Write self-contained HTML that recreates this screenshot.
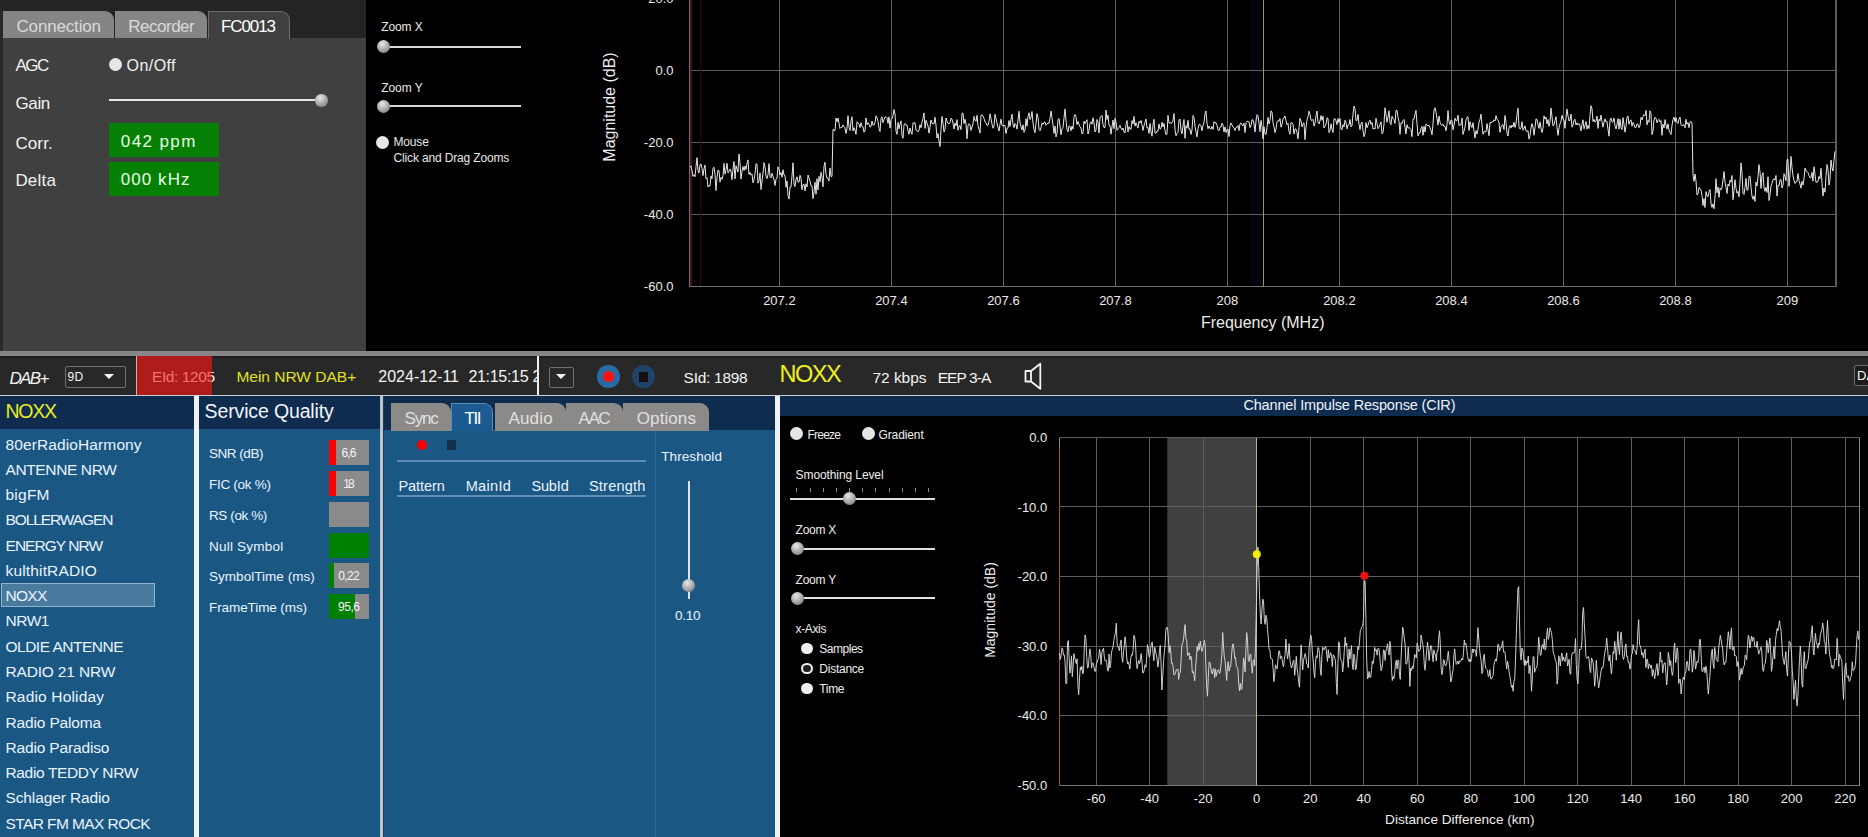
<!DOCTYPE html>
<html><head><meta charset="utf-8"><style>
html,body{margin:0;padding:0;background:#000;width:1868px;height:837px;overflow:hidden;}
body{position:relative;font-family:"Liberation Sans", sans-serif;}
.r{position:absolute;}
.t{position:absolute;white-space:nowrap;}
</style></head><body>
<div class="r" style="left:0px;top:0px;width:366px;height:351px;background:#404040;"></div><div class="r" style="left:0px;top:0px;width:366px;height:38px;background:#242424;"></div><div class="r" style="left:0px;top:11px;width:2.5px;height:340px;background:#2a2a2a;"></div><div class="r" style="left:3px;top:11px;width:111px;height:27px;background:#858585;border-top-right-radius:9px;"></div><div class="r" style="left:115px;top:11px;width:92px;height:27px;background:#858585;border-top-right-radius:9px;"></div><div class="r" style="left:208px;top:11px;width:80px;height:27px;background:#404040;border:1.5px solid #6c6c6c;border-bottom:none;border-top-right-radius:9px;box-sizing:content-box;"></div><div class="t" style="left:16.50px;top:17.61px;font-size:17px;line-height:17px;color:#dadada;letter-spacing:-0.167px;">Connection</div><div class="t" style="left:128.30px;top:17.61px;font-size:17px;line-height:17px;color:#dadada;letter-spacing:-0.503px;">Recorder</div><div class="t" style="left:221.00px;top:17.61px;font-size:17px;line-height:17px;color:#ffffff;letter-spacing:-1.097px;">FC0013</div><div class="t" style="left:15.50px;top:56.91px;font-size:17px;line-height:17px;color:#f2f2f2;letter-spacing:-1.569px;">AGC</div><div class="r" style="left:109.0px;top:58.0px;width:13px;height:13px;border-radius:50%;background:#e6e6e6;"></div><div class="t" style="left:126.60px;top:58.46px;font-size:16px;line-height:16px;color:#f2f2f2;letter-spacing:0.427px;">On/Off</div><div class="t" style="left:15.50px;top:94.91px;font-size:17px;line-height:17px;color:#f2f2f2;letter-spacing:-0.401px;">Gain</div><div class="r" style="left:109px;top:99px;width:208px;height:2px;background:#e6e6e6;"></div><div class="r" style="left:315.4px;top:94.0px;width:12.5px;height:12.5px;border-radius:50%;background:radial-gradient(circle at 40% 30%, #e8e8e8 0%, #b0b0b0 45%, #6a6a6a 100%);"></div><div class="t" style="left:15.40px;top:135.11px;font-size:17px;line-height:17px;color:#f2f2f2;letter-spacing:0.115px;">Corr.</div><div class="r" style="left:109px;top:123px;width:110px;height:34px;background:#058005;"></div><div class="t" style="left:120.80px;top:133.21px;font-size:17px;line-height:17px;color:#e6ffe0;letter-spacing:1.389px;">042 ppm</div><div class="t" style="left:15.40px;top:172.41px;font-size:17px;line-height:17px;color:#f2f2f2;letter-spacing:0.201px;">Delta</div><div class="r" style="left:109px;top:162px;width:110px;height:34px;background:#058005;"></div><div class="t" style="left:120.80px;top:171.11px;font-size:17px;line-height:17px;color:#e6ffe0;letter-spacing:1.057px;">000 kHz</div><div class="t" style="left:381.20px;top:21.34px;font-size:12px;line-height:12px;color:#e8e8e8;letter-spacing:-0.082px;">Zoom X</div><div class="r" style="left:389px;top:45.6px;width:132px;height:2px;background:#d8d8d8;"></div><div class="r" style="left:376.5px;top:40.2px;width:13px;height:13px;border-radius:50%;background:radial-gradient(circle at 40% 30%, #e8e8e8 0%, #b0b0b0 45%, #6a6a6a 100%);"></div><div class="t" style="left:381.20px;top:81.84px;font-size:12px;line-height:12px;color:#e8e8e8;letter-spacing:-0.039px;">Zoom Y</div><div class="r" style="left:389px;top:105.3px;width:132px;height:2px;background:#d8d8d8;"></div><div class="r" style="left:376.5px;top:99.8px;width:13px;height:13px;border-radius:50%;background:radial-gradient(circle at 40% 30%, #e8e8e8 0%, #b0b0b0 45%, #6a6a6a 100%);"></div><div class="r" style="left:375.7px;top:135.7px;width:13px;height:13px;border-radius:50%;background:#e6e6e6;"></div><div class="t" style="left:393.50px;top:136.04px;font-size:12px;line-height:12px;color:#e8e8e8;letter-spacing:-0.178px;">Mouse</div><div class="t" style="left:393.50px;top:152.34px;font-size:12px;line-height:12px;color:#e8e8e8;letter-spacing:-0.153px;">Click and Drag Zooms</div><svg class="r" style="left:0;top:0" width="1868" height="351"><rect x="1251" y="0" width="11" height="286" fill="#04040f"/><line x1="690" y1="-1.5" x2="1836" y2="-1.5" stroke="#5e5e5e" stroke-width="1"/><line x1="690" y1="70.5" x2="1836" y2="70.5" stroke="#5e5e5e" stroke-width="1"/><line x1="690" y1="142.5" x2="1836" y2="142.5" stroke="#5e5e5e" stroke-width="1"/><line x1="690" y1="214.5" x2="1836" y2="214.5" stroke="#5e5e5e" stroke-width="1"/><line x1="690" y1="286.5" x2="1836" y2="286.5" stroke="#707070" stroke-width="1"/><line x1="779.5" y1="0" x2="779.5" y2="286.5" stroke="#5e5e5e" stroke-width="1"/><line x1="891.5" y1="0" x2="891.5" y2="286.5" stroke="#5e5e5e" stroke-width="1"/><line x1="1003.5" y1="0" x2="1003.5" y2="286.5" stroke="#5e5e5e" stroke-width="1"/><line x1="1115.5" y1="0" x2="1115.5" y2="286.5" stroke="#5e5e5e" stroke-width="1"/><line x1="1227.5" y1="0" x2="1227.5" y2="286.5" stroke="#5e5e5e" stroke-width="1"/><line x1="1339.5" y1="0" x2="1339.5" y2="286.5" stroke="#5e5e5e" stroke-width="1"/><line x1="1451.5" y1="0" x2="1451.5" y2="286.5" stroke="#5e5e5e" stroke-width="1"/><line x1="1563.5" y1="0" x2="1563.5" y2="286.5" stroke="#5e5e5e" stroke-width="1"/><line x1="1675.5" y1="0" x2="1675.5" y2="286.5" stroke="#5e5e5e" stroke-width="1"/><line x1="1787.5" y1="0" x2="1787.5" y2="286.5" stroke="#5e5e5e" stroke-width="1"/><line x1="1836" y1="0" x2="1836" y2="287" stroke="#5a5a5a" stroke-width="2"/><line x1="1263.5" y1="0" x2="1263.5" y2="286.5" stroke="#a0a030" stroke-width="1"/><line x1="689.5" y1="0" x2="689.5" y2="287" stroke="#6a6a6a" stroke-width="1"/><line x1="691" y1="0" x2="691" y2="286" stroke="#621224" stroke-width="1.5"/><line x1="700.5" y1="0" x2="700.5" y2="286" stroke="#2a080c" stroke-width="1"/><polyline points="690.0,167.2 691.0,165.8 692.0,171.0 693.0,176.4 694.0,174.8 695.0,176.7 696.0,166.8 697.0,157.7 698.0,170.7 699.0,173.1 700.0,164.5 701.0,164.1 702.0,168.3 703.0,175.6 704.0,168.8 705.0,165.0 706.0,178.8 707.0,177.7 708.0,187.0 709.0,185.5 710.0,186.2 711.0,175.9 712.0,178.8 713.0,168.3 714.0,167.2 715.0,174.4 716.0,190.6 717.0,177.7 718.0,170.0 719.0,170.8 720.0,182.1 721.0,177.4 722.0,179.4 723.0,175.7 724.0,163.4 725.0,174.1 726.0,169.5 727.0,163.3 728.0,173.0 729.0,171.4 730.0,168.9 731.0,171.2 732.0,179.7 733.0,169.1 734.0,161.5 735.0,178.9 736.0,165.7 737.0,169.0 738.0,172.0 739.0,154.0 740.0,163.0 741.0,179.1 742.0,171.4 743.0,166.5 744.0,170.5 745.0,166.1 746.0,169.5 747.0,163.6 748.0,159.9 749.0,174.4 750.0,172.2 751.0,175.2 752.0,174.0 753.0,182.8 754.0,179.6 755.0,173.6 756.0,163.7 757.0,164.3 758.0,183.2 759.0,180.9 760.0,172.9 761.0,189.5 762.0,181.1 763.0,173.2 764.0,162.7 765.0,166.9 766.0,176.5 767.0,178.6 768.0,174.7 769.0,163.6 770.0,176.4 771.0,177.9 772.0,173.3 773.0,176.4 774.0,179.6 775.0,185.5 776.0,179.1 777.0,178.1 778.0,166.8 779.0,169.5 780.0,175.0 781.0,172.5 782.0,177.3 783.0,169.7 784.0,175.1 785.0,175.6 786.0,187.3 787.0,181.0 788.0,195.6 789.0,199.1 790.0,186.9 791.0,187.1 792.0,176.0 793.0,162.8 794.0,184.1 795.0,186.6 796.0,179.2 797.0,176.8 798.0,182.1 799.0,182.1 800.0,175.3 801.0,178.2 802.0,189.8 803.0,184.7 804.0,184.3 805.0,190.9 806.0,183.7 807.0,187.0 808.0,175.0 809.0,178.0 810.0,181.1 811.0,185.7 812.0,185.9 813.0,198.6 814.0,191.9 815.0,182.2 816.0,194.3 817.0,178.6 818.0,189.9 819.0,176.4 820.0,181.9 821.0,172.3 822.0,177.3 823.0,186.8 824.0,166.3 825.0,162.2 826.0,174.2 827.0,178.0 828.0,178.5 829.0,181.0 830.0,168.0 831.0,176.5 832.0,176.4 833.0,129.4 834.0,130.2 835.0,130.7 836.0,118.0 837.0,121.8 838.0,118.1 839.0,123.3 840.0,128.4 841.0,127.4 842.0,127.6 843.0,124.9 844.0,126.4 845.0,127.9 846.0,133.5 847.0,128.3 848.0,115.7 849.0,127.1 850.0,130.6 851.0,121.3 852.0,116.7 853.0,131.0 854.0,127.7 855.0,130.1 856.0,134.3 857.0,121.7 858.0,122.9 859.0,124.4 860.0,127.6 861.0,122.7 862.0,126.6 863.0,126.8 864.0,132.2 865.0,130.8 866.0,117.9 867.0,124.7 868.0,122.7 869.0,124.2 870.0,127.1 871.0,126.6 872.0,121.0 873.0,125.0 874.0,125.1 875.0,122.3 876.0,115.8 877.0,117.7 878.0,121.3 879.0,128.5 880.0,131.6 881.0,118.6 882.0,116.9 883.0,122.7 884.0,119.7 885.0,117.3 886.0,116.6 887.0,117.7 888.0,123.4 889.0,116.8 890.0,128.2 891.0,119.6 892.0,118.6 893.0,115.4 894.0,109.4 895.0,113.9 896.0,131.0 897.0,134.4 898.0,122.3 899.0,128.9 900.0,124.1 901.0,120.9 902.0,135.4 903.0,138.3 904.0,124.9 905.0,123.5 906.0,125.2 907.0,125.0 908.0,130.9 909.0,134.2 910.0,128.0 911.0,132.0 912.0,134.3 913.0,122.9 914.0,123.0 915.0,122.7 916.0,130.1 917.0,130.3 918.0,131.8 919.0,130.2 920.0,124.8 921.0,127.8 922.0,122.2 923.0,118.6 924.0,112.9 925.0,128.4 926.0,120.3 927.0,123.2 928.0,125.9 929.0,133.1 930.0,127.5 931.0,120.0 932.0,123.2 933.0,123.8 934.0,123.9 935.0,117.2 936.0,125.3 937.0,138.0 938.0,133.4 939.0,140.8 940.0,146.6 941.0,129.5 942.0,116.4 943.0,123.3 944.0,132.0 945.0,129.5 946.0,118.0 947.0,121.3 948.0,123.4 949.0,124.0 950.0,122.6 951.0,118.2 952.0,119.1 953.0,123.1 954.0,129.1 955.0,122.9 956.0,125.8 957.0,119.7 958.0,130.2 959.0,126.3 960.0,125.7 961.0,129.6 962.0,113.2 963.0,113.3 964.0,123.7 965.0,119.2 966.0,123.9 967.0,138.7 968.0,125.7 969.0,123.7 970.0,124.8 971.0,130.5 972.0,127.0 973.0,123.7 974.0,116.4 975.0,120.2 976.0,121.4 977.0,115.3 978.0,125.7 979.0,129.2 980.0,133.2 981.0,115.4 982.0,114.7 983.0,116.1 984.0,118.4 985.0,122.0 986.0,122.7 987.0,125.3 988.0,125.3 989.0,121.8 990.0,113.9 991.0,118.5 992.0,124.2 993.0,128.2 994.0,126.3 995.0,114.3 996.0,118.6 997.0,123.2 998.0,127.2 999.0,131.0 1000.0,124.5 1001.0,119.1 1002.0,125.3 1003.0,125.9 1004.0,125.3 1005.0,125.5 1006.0,133.6 1007.0,128.4 1008.0,128.1 1009.0,120.5 1010.0,126.5 1011.0,119.3 1012.0,114.2 1013.0,124.5 1014.0,127.6 1015.0,123.4 1016.0,124.8 1017.0,129.2 1018.0,119.7 1019.0,111.3 1020.0,123.0 1021.0,126.7 1022.0,129.9 1023.0,124.8 1024.0,132.3 1025.0,130.4 1026.0,118.7 1027.0,126.2 1028.0,116.4 1029.0,112.8 1030.0,119.5 1031.0,117.6 1032.0,111.5 1033.0,123.2 1034.0,129.4 1035.0,132.7 1036.0,123.4 1037.0,113.6 1038.0,117.3 1039.0,129.3 1040.0,130.8 1041.0,127.6 1042.0,122.9 1043.0,124.4 1044.0,122.4 1045.0,122.1 1046.0,125.3 1047.0,124.1 1048.0,122.7 1049.0,123.4 1050.0,118.4 1051.0,111.1 1052.0,117.7 1053.0,124.9 1054.0,133.4 1055.0,126.1 1056.0,136.9 1057.0,133.7 1058.0,119.5 1059.0,118.6 1060.0,126.0 1061.0,134.8 1062.0,129.1 1063.0,127.5 1064.0,117.9 1065.0,109.0 1066.0,120.6 1067.0,129.7 1068.0,131.9 1069.0,125.9 1070.0,126.4 1071.0,130.8 1072.0,126.1 1073.0,129.1 1074.0,117.2 1075.0,114.5 1076.0,116.5 1077.0,124.6 1078.0,121.5 1079.0,124.4 1080.0,126.7 1081.0,128.0 1082.0,133.9 1083.0,133.2 1084.0,121.1 1085.0,123.6 1086.0,121.4 1087.0,119.7 1088.0,134.0 1089.0,130.5 1090.0,123.2 1091.0,121.7 1092.0,124.2 1093.0,117.8 1094.0,122.7 1095.0,132.0 1096.0,129.9 1097.0,119.5 1098.0,122.4 1099.0,132.9 1100.0,117.3 1101.0,116.7 1102.0,115.4 1103.0,124.7 1104.0,127.5 1105.0,127.7 1106.0,110.1 1107.0,119.5 1108.0,115.3 1109.0,125.4 1110.0,125.8 1111.0,134.2 1112.0,127.0 1113.0,120.0 1114.0,128.7 1115.0,118.5 1116.0,121.7 1117.0,130.3 1118.0,128.8 1119.0,127.3 1120.0,125.4 1121.0,128.2 1122.0,129.9 1123.0,128.0 1124.0,132.0 1125.0,133.0 1126.0,124.6 1127.0,120.5 1128.0,131.9 1129.0,126.6 1130.0,129.0 1131.0,129.4 1132.0,120.6 1133.0,123.9 1134.0,116.4 1135.0,126.1 1136.0,122.7 1137.0,125.6 1138.0,127.9 1139.0,121.4 1140.0,123.2 1141.0,120.4 1142.0,124.7 1143.0,130.5 1144.0,125.7 1145.0,122.4 1146.0,119.1 1147.0,128.1 1148.0,127.4 1149.0,133.4 1150.0,123.5 1151.0,131.8 1152.0,136.2 1153.0,125.0 1154.0,119.2 1155.0,133.0 1156.0,133.3 1157.0,131.1 1158.0,131.1 1159.0,124.0 1160.0,129.1 1161.0,128.4 1162.0,122.2 1163.0,127.0 1164.0,123.4 1165.0,130.7 1166.0,134.7 1167.0,134.0 1168.0,115.3 1169.0,123.0 1170.0,122.8 1171.0,123.4 1172.0,122.8 1173.0,120.8 1174.0,113.5 1175.0,129.6 1176.0,135.8 1177.0,133.6 1178.0,132.2 1179.0,119.9 1180.0,119.1 1181.0,130.3 1182.0,133.9 1183.0,125.9 1184.0,119.5 1185.0,138.3 1186.0,125.6 1187.0,128.2 1188.0,120.3 1189.0,129.3 1190.0,128.8 1191.0,134.5 1192.0,129.8 1193.0,115.6 1194.0,117.6 1195.0,126.3 1196.0,132.0 1197.0,136.9 1198.0,128.6 1199.0,124.6 1200.0,124.4 1201.0,125.9 1202.0,130.8 1203.0,125.7 1204.0,122.4 1205.0,113.6 1206.0,111.0 1207.0,123.2 1208.0,128.7 1209.0,126.0 1210.0,128.5 1211.0,129.1 1212.0,126.4 1213.0,129.4 1214.0,121.6 1215.0,123.3 1216.0,122.6 1217.0,125.5 1218.0,129.6 1219.0,130.8 1220.0,127.1 1221.0,127.1 1222.0,123.1 1223.0,125.3 1224.0,131.9 1225.0,126.9 1226.0,132.6 1227.0,129.6 1228.0,129.0 1229.0,136.6 1230.0,125.7 1231.0,123.0 1232.0,125.1 1233.0,127.0 1234.0,127.8 1235.0,130.5 1236.0,127.4 1237.0,127.3 1238.0,125.5 1239.0,130.6 1240.0,123.7 1241.0,122.8 1242.0,125.0 1243.0,125.9 1244.0,123.2 1245.0,132.5 1246.0,122.8 1247.0,121.3 1248.0,121.3 1249.0,121.9 1250.0,127.6 1251.0,125.4 1252.0,119.7 1253.0,120.1 1254.0,123.9 1255.0,132.0 1256.0,121.0 1257.0,114.7 1258.0,115.9 1259.0,123.1 1260.0,131.7 1261.0,120.3 1262.0,126.7 1263.0,138.8 1264.0,126.7 1265.0,134.0 1266.0,134.4 1267.0,127.6 1268.0,117.4 1269.0,124.0 1270.0,120.4 1271.0,110.8 1272.0,112.0 1273.0,122.7 1274.0,127.0 1275.0,132.6 1276.0,129.1 1277.0,121.6 1278.0,120.7 1279.0,121.3 1280.0,118.6 1281.0,127.2 1282.0,124.2 1283.0,118.7 1284.0,117.9 1285.0,116.0 1286.0,120.4 1287.0,124.7 1288.0,123.3 1289.0,131.5 1290.0,134.2 1291.0,122.5 1292.0,123.0 1293.0,124.2 1294.0,134.1 1295.0,129.0 1296.0,129.0 1297.0,132.7 1298.0,138.9 1299.0,127.6 1300.0,118.3 1301.0,121.1 1302.0,126.9 1303.0,123.7 1304.0,122.8 1305.0,139.6 1306.0,127.4 1307.0,119.8 1308.0,116.8 1309.0,111.2 1310.0,114.3 1311.0,120.0 1312.0,120.5 1313.0,119.3 1314.0,126.1 1315.0,123.5 1316.0,115.8 1317.0,111.0 1318.0,122.3 1319.0,124.0 1320.0,120.9 1321.0,115.5 1322.0,120.3 1323.0,116.2 1324.0,128.0 1325.0,126.4 1326.0,124.2 1327.0,117.9 1328.0,118.4 1329.0,132.7 1330.0,130.8 1331.0,123.8 1332.0,129.3 1333.0,132.5 1334.0,118.8 1335.0,118.8 1336.0,120.8 1337.0,124.7 1338.0,118.5 1339.0,122.5 1340.0,118.6 1341.0,129.0 1342.0,129.9 1343.0,124.6 1344.0,126.9 1345.0,120.3 1346.0,122.5 1347.0,128.9 1348.0,125.0 1349.0,124.6 1350.0,119.5 1351.0,127.0 1352.0,125.7 1353.0,114.1 1354.0,106.1 1355.0,108.7 1356.0,120.5 1357.0,120.4 1358.0,114.4 1359.0,123.8 1360.0,129.7 1361.0,123.8 1362.0,122.0 1363.0,130.3 1364.0,136.7 1365.0,133.7 1366.0,122.6 1367.0,127.7 1368.0,125.3 1369.0,121.9 1370.0,120.2 1371.0,124.4 1372.0,122.4 1373.0,129.0 1374.0,128.4 1375.0,129.0 1376.0,118.3 1377.0,123.4 1378.0,128.7 1379.0,127.2 1380.0,124.7 1381.0,121.9 1382.0,133.9 1383.0,132.6 1384.0,124.1 1385.0,107.7 1386.0,114.9 1387.0,122.3 1388.0,117.0 1389.0,110.7 1390.0,123.0 1391.0,124.7 1392.0,116.3 1393.0,118.4 1394.0,119.7 1395.0,123.5 1396.0,110.6 1397.0,110.2 1398.0,117.3 1399.0,121.5 1400.0,134.3 1401.0,122.8 1402.0,123.6 1403.0,120.5 1404.0,119.5 1405.0,127.1 1406.0,134.0 1407.0,124.7 1408.0,128.2 1409.0,127.5 1410.0,128.3 1411.0,129.6 1412.0,136.6 1413.0,119.1 1414.0,119.2 1415.0,114.2 1416.0,110.4 1417.0,123.4 1418.0,135.8 1419.0,133.1 1420.0,132.9 1421.0,128.3 1422.0,126.5 1423.0,135.3 1424.0,126.3 1425.0,132.1 1426.0,124.1 1427.0,124.5 1428.0,125.9 1429.0,125.3 1430.0,127.9 1431.0,130.4 1432.0,134.8 1433.0,123.7 1434.0,110.1 1435.0,107.7 1436.0,112.3 1437.0,118.7 1438.0,125.1 1439.0,116.0 1440.0,122.3 1441.0,124.6 1442.0,125.5 1443.0,124.2 1444.0,126.4 1445.0,126.3 1446.0,130.9 1447.0,124.5 1448.0,110.6 1449.0,121.6 1450.0,124.6 1451.0,120.0 1452.0,120.3 1453.0,129.9 1454.0,125.3 1455.0,118.2 1456.0,120.8 1457.0,120.7 1458.0,115.1 1459.0,125.8 1460.0,124.8 1461.0,124.9 1462.0,118.0 1463.0,134.5 1464.0,131.0 1465.0,127.0 1466.0,119.7 1467.0,117.5 1468.0,116.6 1469.0,130.5 1470.0,121.7 1471.0,125.4 1472.0,127.5 1473.0,122.6 1474.0,131.3 1475.0,138.0 1476.0,130.6 1477.0,134.1 1478.0,129.2 1479.0,122.0 1480.0,119.4 1481.0,114.1 1482.0,124.9 1483.0,134.3 1484.0,131.5 1485.0,131.9 1486.0,131.8 1487.0,123.6 1488.0,129.7 1489.0,135.7 1490.0,122.3 1491.0,123.1 1492.0,121.6 1493.0,121.9 1494.0,119.8 1495.0,121.1 1496.0,115.7 1497.0,119.1 1498.0,120.3 1499.0,122.7 1500.0,132.3 1501.0,127.0 1502.0,125.3 1503.0,124.6 1504.0,129.6 1505.0,115.5 1506.0,122.6 1507.0,133.2 1508.0,136.0 1509.0,127.8 1510.0,125.6 1511.0,128.1 1512.0,125.0 1513.0,126.8 1514.0,122.2 1515.0,127.5 1516.0,123.7 1517.0,114.6 1518.0,108.3 1519.0,127.1 1520.0,129.0 1521.0,128.4 1522.0,121.6 1523.0,130.3 1524.0,128.2 1525.0,125.9 1526.0,131.0 1527.0,131.4 1528.0,130.6 1529.0,139.0 1530.0,135.8 1531.0,128.0 1532.0,123.7 1533.0,127.0 1534.0,135.3 1535.0,127.8 1536.0,118.8 1537.0,119.5 1538.0,124.7 1539.0,128.4 1540.0,121.9 1541.0,128.0 1542.0,132.6 1543.0,128.3 1544.0,115.8 1545.0,119.1 1546.0,117.1 1547.0,124.0 1548.0,119.5 1549.0,126.4 1550.0,122.3 1551.0,108.0 1552.0,116.6 1553.0,125.9 1554.0,124.5 1555.0,120.4 1556.0,116.7 1557.0,127.4 1558.0,135.3 1559.0,127.7 1560.0,123.9 1561.0,121.4 1562.0,115.3 1563.0,119.1 1564.0,119.9 1565.0,128.3 1566.0,117.3 1567.0,109.0 1568.0,116.1 1569.0,121.0 1570.0,120.2 1571.0,114.0 1572.0,127.2 1573.0,125.1 1574.0,120.2 1575.0,119.3 1576.0,125.1 1577.0,122.8 1578.0,124.9 1579.0,123.6 1580.0,125.9 1581.0,130.9 1582.0,124.2 1583.0,119.8 1584.0,128.8 1585.0,125.6 1586.0,121.5 1587.0,129.1 1588.0,125.4 1589.0,128.5 1590.0,115.3 1591.0,105.7 1592.0,108.9 1593.0,121.5 1594.0,119.4 1595.0,122.0 1596.0,121.0 1597.0,116.0 1598.0,128.4 1599.0,119.2 1600.0,120.9 1601.0,115.1 1602.0,121.7 1603.0,127.2 1604.0,122.0 1605.0,118.9 1606.0,122.0 1607.0,121.5 1608.0,129.1 1609.0,136.2 1610.0,120.2 1611.0,118.2 1612.0,121.9 1613.0,121.8 1614.0,118.0 1615.0,126.1 1616.0,128.9 1617.0,124.3 1618.0,118.6 1619.0,129.1 1620.0,119.2 1621.0,127.5 1622.0,129.6 1623.0,117.7 1624.0,124.4 1625.0,132.2 1626.0,126.4 1627.0,117.1 1628.0,115.9 1629.0,124.3 1630.0,121.0 1631.0,119.8 1632.0,126.3 1633.0,122.5 1634.0,124.2 1635.0,127.7 1636.0,127.4 1637.0,124.0 1638.0,124.2 1639.0,127.7 1640.0,125.6 1641.0,117.3 1642.0,119.9 1643.0,116.6 1644.0,114.6 1645.0,115.7 1646.0,110.4 1647.0,124.8 1648.0,120.4 1649.0,122.3 1650.0,110.8 1651.0,113.6 1652.0,134.6 1653.0,131.3 1654.0,120.0 1655.0,117.2 1656.0,118.4 1657.0,122.7 1658.0,120.3 1659.0,119.3 1660.0,122.1 1661.0,120.6 1662.0,135.3 1663.0,124.2 1664.0,128.0 1665.0,119.6 1666.0,125.1 1667.0,129.0 1668.0,123.9 1669.0,130.0 1670.0,132.5 1671.0,134.5 1672.0,125.3 1673.0,119.5 1674.0,117.1 1675.0,122.0 1676.0,117.6 1677.0,122.4 1678.0,123.6 1679.0,119.1 1680.0,117.1 1681.0,124.8 1682.0,125.9 1683.0,125.0 1684.0,124.7 1685.0,127.8 1686.0,119.3 1687.0,124.3 1688.0,122.6 1689.0,127.7 1690.0,122.2 1691.0,121.5 1692.0,123.2 1693.0,174.7 1694.0,181.3 1695.0,174.0 1696.0,180.9 1697.0,195.0 1698.0,194.0 1699.0,187.3 1700.0,188.9 1701.0,190.1 1702.0,195.4 1703.0,205.5 1704.0,198.6 1705.0,207.5 1706.0,191.6 1707.0,195.9 1708.0,196.7 1709.0,191.7 1710.0,189.6 1711.0,203.1 1712.0,207.4 1713.0,203.9 1714.0,208.7 1715.0,197.0 1716.0,178.7 1717.0,192.8 1718.0,186.9 1719.0,197.4 1720.0,188.2 1721.0,189.8 1722.0,187.5 1723.0,179.7 1724.0,171.5 1725.0,182.2 1726.0,187.3 1727.0,193.5 1728.0,184.1 1729.0,186.1 1730.0,180.2 1731.0,182.2 1732.0,175.5 1733.0,199.7 1734.0,190.3 1735.0,179.7 1736.0,188.4 1737.0,193.1 1738.0,191.4 1739.0,196.8 1740.0,182.4 1741.0,162.9 1742.0,173.2 1743.0,193.4 1744.0,194.5 1745.0,187.6 1746.0,178.4 1747.0,190.5 1748.0,189.7 1749.0,176.5 1750.0,176.0 1751.0,187.3 1752.0,196.2 1753.0,199.4 1754.0,195.8 1755.0,201.4 1756.0,182.1 1757.0,186.0 1758.0,176.8 1759.0,164.6 1760.0,171.8 1761.0,188.4 1762.0,175.3 1763.0,172.6 1764.0,187.9 1765.0,191.3 1766.0,187.3 1767.0,192.5 1768.0,176.7 1769.0,200.5 1770.0,195.1 1771.0,185.8 1772.0,183.2 1773.0,179.6 1774.0,178.8 1775.0,180.1 1776.0,175.5 1777.0,196.0 1778.0,185.4 1779.0,185.9 1780.0,179.9 1781.0,179.6 1782.0,188.1 1783.0,185.2 1784.0,173.7 1785.0,176.5 1786.0,180.8 1787.0,159.7 1788.0,159.3 1789.0,186.4 1790.0,174.6 1791.0,156.4 1792.0,167.5 1793.0,175.7 1794.0,180.6 1795.0,183.4 1796.0,181.8 1797.0,181.6 1798.0,173.5 1799.0,180.5 1800.0,184.0 1801.0,188.2 1802.0,181.5 1803.0,185.0 1804.0,178.3 1805.0,168.2 1806.0,171.2 1807.0,171.4 1808.0,172.7 1809.0,175.6 1810.0,177.8 1811.0,177.7 1812.0,172.4 1813.0,181.2 1814.0,166.8 1815.0,174.4 1816.0,182.5 1817.0,182.0 1818.0,181.5 1819.0,176.4 1820.0,178.7 1821.0,168.3 1822.0,183.2 1823.0,196.0 1824.0,188.1 1825.0,192.2 1826.0,176.3 1827.0,164.5 1828.0,169.3 1829.0,185.1 1830.0,179.3 1831.0,160.0 1832.0,167.9 1833.0,171.0 1834.0,160.4 1835.0,151.3" fill="none" stroke="#e6e6e6" stroke-width="1"/></svg><div class="t" style="left:648.20px;top:-7.70px;font-size:13px;line-height:13px;color:#ececec;">20.0</div><div class="t" style="left:655.43px;top:64.30px;font-size:13px;line-height:13px;color:#ececec;">0.0</div><div class="t" style="left:643.87px;top:136.30px;font-size:13px;line-height:13px;color:#ececec;">-20.0</div><div class="t" style="left:643.87px;top:208.30px;font-size:13px;line-height:13px;color:#ececec;">-40.0</div><div class="t" style="left:643.87px;top:280.30px;font-size:13px;line-height:13px;color:#ececec;">-60.0</div><div class="t" style="left:763.14px;top:294.00px;font-size:13px;line-height:13px;color:#ececec;">207.2</div><div class="t" style="left:875.14px;top:294.00px;font-size:13px;line-height:13px;color:#ececec;">207.4</div><div class="t" style="left:987.14px;top:294.00px;font-size:13px;line-height:13px;color:#ececec;">207.6</div><div class="t" style="left:1099.14px;top:294.00px;font-size:13px;line-height:13px;color:#ececec;">207.8</div><div class="t" style="left:1216.56px;top:294.00px;font-size:13px;line-height:13px;color:#ececec;">208</div><div class="t" style="left:1323.14px;top:294.00px;font-size:13px;line-height:13px;color:#ececec;">208.2</div><div class="t" style="left:1435.14px;top:294.00px;font-size:13px;line-height:13px;color:#ececec;">208.4</div><div class="t" style="left:1547.14px;top:294.00px;font-size:13px;line-height:13px;color:#ececec;">208.6</div><div class="t" style="left:1659.14px;top:294.00px;font-size:13px;line-height:13px;color:#ececec;">208.8</div><div class="t" style="left:1776.56px;top:294.00px;font-size:13px;line-height:13px;color:#ececec;">209</div><div class="t" style="left:1200.91px;top:314.66px;font-size:16px;line-height:16px;color:#ececec;">Frequency (MHz)</div><div class="t" style="left:609.6px;top:106.8px;font-size:16px;line-height:16px;color:#ececec;transform:translate(-50%,-50%) rotate(-90deg);">Magnitude (dB)</div><div class="r" style="left:0px;top:351px;width:1868px;height:5px;background:#868686;"></div><div class="r" style="left:0px;top:356px;width:1868px;height:39px;background:#282828;"></div><div class="r" style="left:0px;top:356px;width:1868px;height:1.5px;background:#1c1c1c;"></div><div class="r" style="left:0px;top:395px;width:1868px;height:1px;background:#c4ccd4;"></div><div class="t" style="left:9.40px;top:369.51px;font-size:17px;line-height:17px;color:#f4f4f4;letter-spacing:-1.593px;font-style:italic;">DAB+</div><div class="r" style="left:65px;top:366px;width:59px;height:20px;border:1.2px solid #707070;border-radius:2px;"></div><div class="t" style="left:67.50px;top:370.84px;font-size:12px;line-height:12px;color:#f4f4f4;letter-spacing:0.364px;">9D</div><div class="r" style="left:104px;top:374px;width:0;height:0;border-left:5px solid transparent;border-right:5px solid transparent;border-top:5.5px solid #f4f4f4;"></div><div class="r" style="left:136px;top:356px;width:76px;height:39px;background:#b01c1c;"></div><div class="r" style="left:136px;top:356px;width:1px;height:39px;background:#e0a8a8;"></div><div class="r" style="left:136px;top:356px;width:76px;height:39px;overflow:hidden;"><div class="t" style="left:16.00px;top:13.28px;font-size:15.5px;line-height:15.5px;color:#f07474;letter-spacing:-0.419px;">EId: 1205</div></div><div class="r" style="left:212px;top:356px;width:20px;height:39px;overflow:hidden;"><div class="t" style="left:-60.00px;top:13.28px;font-size:15.5px;line-height:15.5px;color:#f4f4f4;letter-spacing:-0.419px;">EId: 1205</div></div><div class="t" style="left:236.40px;top:369.28px;font-size:15.5px;line-height:15.5px;color:#e2e21e;letter-spacing:-0.005px;">Mein NRW DAB+</div><div class="r" style="left:370px;top:356px;width:167px;height:39px;overflow:hidden;"><div class="t" style="left:8.30px;top:13.06px;font-size:16px;line-height:16px;color:#f4f4f4;letter-spacing:0.005px;">2024-12-11</div><div class="t" style="left:98.40px;top:13.06px;font-size:16px;line-height:16px;color:#f4f4f4;letter-spacing:-0.300px;">21:15:15 2024</div></div><div class="r" style="left:537px;top:356px;width:2px;height:39px;background:#f0f0f0;"></div><div class="r" style="left:548.5px;top:366.5px;width:23px;height:19px;border:1.2px solid #707070;border-radius:2px;"></div><div class="r" style="left:556px;top:374px;width:0;height:0;border-left:5px solid transparent;border-right:5px solid transparent;border-top:5.5px solid #f4f4f4;"></div><div class="r" style="left:597.2px;top:365.4px;width:22.5px;height:22.5px;border-radius:50%;background:#2a6aa2;"></div><div class="r" style="left:603.0px;top:371.1px;width:11px;height:11px;border-radius:50%;background:#ff1010;"></div><div class="r" style="left:632.0px;top:365.3px;width:23px;height:23px;border-radius:50%;background:#20436a;"></div><div class="r" style="left:639.3px;top:372.3px;width:9px;height:10px;background:#141010;"></div><div class="t" style="left:683.60px;top:369.68px;font-size:15.5px;line-height:15.5px;color:#f4f4f4;letter-spacing:-0.282px;">SId: 1898</div><div class="t" style="left:779.60px;top:362.71px;font-size:23.5px;line-height:23.5px;color:#f0f020;letter-spacing:-1.533px;">NOXX</div><div class="t" style="left:872.50px;top:369.68px;font-size:15.5px;line-height:15.5px;color:#f4f4f4;letter-spacing:-0.047px;">72 kbps</div><div class="t" style="left:937.70px;top:369.68px;font-size:15.5px;line-height:15.5px;color:#f4f4f4;letter-spacing:-0.911px;">EEP 3-A</div><svg class="r" style="left:1020px;top:360px" width="28" height="32"><path d="M5.5 11 H11 L20.3 3.8 V28.8 L11 21.5 H5.5 Z M11 11 V21.5" fill="none" stroke="#f4f4f4" stroke-width="1.8" stroke-linejoin="round"/></svg><div class="r" style="left:1854px;top:364.5px;width:20px;height:19.5px;border:1.2px solid #6a6a6a;border-radius:2px;background:#1c1c1c;"></div><div class="t" style="left:1857.00px;top:368.60px;font-size:13px;line-height:13px;color:#f4f4f4;">DA</div><div class="r" style="left:0px;top:396px;width:1868px;height:441px;background:#000;"></div><div class="r" style="left:0px;top:396px;width:194px;height:441px;background:#1a5783;"></div><div class="r" style="left:0px;top:396px;width:194px;height:33px;background:#0f2c4f;"></div><div class="r" style="left:194px;top:396px;width:5px;height:441px;background:#eef2f6;"></div><div class="t" style="left:5.40px;top:402.49px;font-size:19.5px;line-height:19.5px;color:#e8ea1e;letter-spacing:-1.221px;">NOXX</div><div class="r" style="left:0.5px;top:582.5px;width:154.5px;height:24.5px;background:#4a7a9e;border:1px solid #90b4d0;box-sizing:border-box;"></div><div class="t" style="left:5.50px;top:436.58px;font-size:15.5px;line-height:15.5px;color:#eaf4ff;letter-spacing:0.113px;">80erRadioHarmony</div><div class="t" style="left:5.50px;top:461.85px;font-size:15.5px;line-height:15.5px;color:#eaf4ff;letter-spacing:-0.380px;">ANTENNE NRW</div><div class="t" style="left:5.50px;top:487.12px;font-size:15.5px;line-height:15.5px;color:#eaf4ff;letter-spacing:0.235px;">bigFM</div><div class="t" style="left:5.50px;top:512.39px;font-size:15.5px;line-height:15.5px;color:#eaf4ff;letter-spacing:-1.087px;">BOLLERWAGEN</div><div class="t" style="left:5.50px;top:537.66px;font-size:15.5px;line-height:15.5px;color:#eaf4ff;letter-spacing:-0.958px;">ENERGY NRW</div><div class="t" style="left:5.50px;top:562.93px;font-size:15.5px;line-height:15.5px;color:#eaf4ff;letter-spacing:0.157px;">kulthitRADIO</div><div class="t" style="left:5.50px;top:588.20px;font-size:15.5px;line-height:15.5px;color:#eaf4ff;letter-spacing:-0.709px;">NOXX</div><div class="t" style="left:5.50px;top:613.47px;font-size:15.5px;line-height:15.5px;color:#eaf4ff;letter-spacing:-0.484px;">NRW1</div><div class="t" style="left:5.50px;top:638.74px;font-size:15.5px;line-height:15.5px;color:#eaf4ff;letter-spacing:-0.503px;">OLDIE ANTENNE</div><div class="t" style="left:5.50px;top:664.01px;font-size:15.5px;line-height:15.5px;color:#eaf4ff;letter-spacing:-0.171px;">RADIO 21 NRW</div><div class="t" style="left:5.50px;top:689.28px;font-size:15.5px;line-height:15.5px;color:#eaf4ff;letter-spacing:0.166px;">Radio Holiday</div><div class="t" style="left:5.50px;top:714.55px;font-size:15.5px;line-height:15.5px;color:#eaf4ff;letter-spacing:-0.152px;">Radio Paloma</div><div class="t" style="left:5.50px;top:739.82px;font-size:15.5px;line-height:15.5px;color:#eaf4ff;letter-spacing:-0.159px;">Radio Paradiso</div><div class="t" style="left:5.50px;top:765.09px;font-size:15.5px;line-height:15.5px;color:#eaf4ff;letter-spacing:-0.352px;">Radio TEDDY NRW</div><div class="t" style="left:5.50px;top:790.36px;font-size:15.5px;line-height:15.5px;color:#eaf4ff;letter-spacing:-0.121px;">Schlager Radio</div><div class="t" style="left:5.50px;top:815.63px;font-size:15.5px;line-height:15.5px;color:#eaf4ff;letter-spacing:-0.584px;">STAR FM MAX ROCK</div><div class="r" style="left:199px;top:396px;width:181px;height:441px;background:#1a5783;"></div><div class="r" style="left:199px;top:396px;width:181px;height:33px;background:#0f2c4f;"></div><div class="r" style="left:380px;top:396px;width:2.5px;height:441px;background:#b8c4d0;"></div><div class="r" style="left:382.5px;top:396px;width:1px;height:441px;background:#2a3a4a;"></div><div class="t" style="left:204.60px;top:402.19px;font-size:19.5px;line-height:19.5px;color:#f2f6fa;letter-spacing:-0.138px;">Service Quality</div><div class="t" style="left:209.00px;top:447.27px;font-size:13.5px;line-height:13.5px;color:#eaf4ff;letter-spacing:-0.479px;">SNR (dB)</div><div class="r" style="left:329px;top:440px;width:40px;height:25px;background:#8a8a8a;"></div><div class="r" style="left:329px;top:440px;width:7px;height:25px;background:#ff0000;"></div><div class="t" style="left:341.55px;top:446.84px;font-size:12px;line-height:12px;color:#f4f4f4;letter-spacing:-0.890px;">6,6</div><div class="t" style="left:209.00px;top:478.07px;font-size:13.5px;line-height:13.5px;color:#eaf4ff;letter-spacing:-0.289px;">FIC (ok %)</div><div class="r" style="left:329px;top:471px;width:40px;height:25px;background:#8a8a8a;"></div><div class="r" style="left:329px;top:471px;width:7px;height:25px;background:#ff0000;"></div><div class="t" style="left:343.30px;top:477.64px;font-size:12px;line-height:12px;color:#f4f4f4;letter-spacing:-1.944px;">18</div><div class="t" style="left:209.00px;top:508.87px;font-size:13.5px;line-height:13.5px;color:#eaf4ff;letter-spacing:-0.401px;">RS (ok %)</div><div class="r" style="left:329px;top:502px;width:40px;height:25px;background:#8a8a8a;"></div><div class="t" style="left:209.00px;top:539.67px;font-size:13.5px;line-height:13.5px;color:#eaf4ff;letter-spacing:0.218px;">Null Symbol</div><div class="r" style="left:329px;top:533px;width:40px;height:25px;background:#8a8a8a;"></div><div class="r" style="left:329px;top:533px;width:40px;height:25px;background:#008000;"></div><div class="t" style="left:209.00px;top:570.47px;font-size:13.5px;line-height:13.5px;color:#eaf4ff;letter-spacing:0.040px;">SymbolTime (ms)</div><div class="r" style="left:329px;top:563px;width:40px;height:25px;background:#8a8a8a;"></div><div class="r" style="left:329px;top:563px;width:5px;height:25px;background:#008000;"></div><div class="t" style="left:338.25px;top:570.04px;font-size:12px;line-height:12px;color:#f4f4f4;letter-spacing:-0.617px;">0,22</div><div class="t" style="left:209.00px;top:601.27px;font-size:13.5px;line-height:13.5px;color:#eaf4ff;letter-spacing:-0.088px;">FrameTime (ms)</div><div class="r" style="left:329px;top:594px;width:40px;height:25px;background:#8a8a8a;"></div><div class="r" style="left:329px;top:594px;width:26px;height:25px;background:#008000;"></div><div class="t" style="left:337.95px;top:600.84px;font-size:12px;line-height:12px;color:#f4f4f4;letter-spacing:-0.417px;">95,6</div><div class="r" style="left:383.5px;top:396px;width:391.5px;height:441px;background:#1a5783;"></div><div class="r" style="left:383.5px;top:396px;width:391.5px;height:34px;background:#0f2c4f;"></div><div class="r" style="left:775px;top:396px;width:5px;height:441px;background:#eef2f6;"></div><div class="r" style="left:391px;top:403px;width:60px;height:28px;background:#8c8a88;border-top-right-radius:9px;"></div><div class="t" style="left:404.50px;top:409.61px;font-size:17px;line-height:17px;color:#e0e0e0;letter-spacing:-1.164px;">Sync</div><div class="r" style="left:451px;top:403px;width:42px;height:28px;background:#1b5b92;border:1px solid #5a8cb8;border-bottom:none;box-sizing:border-box;border-top-right-radius:9px;"></div><div class="t" style="left:464.50px;top:409.61px;font-size:17px;line-height:17px;color:#ffffff;letter-spacing:-1.420px;">TII</div><div class="r" style="left:495px;top:403px;width:71px;height:28px;background:#8c8a88;border-top-right-radius:9px;"></div><div class="t" style="left:508.40px;top:409.61px;font-size:17px;line-height:17px;color:#e0e0e0;letter-spacing:0.179px;">Audio</div><div class="r" style="left:566px;top:403px;width:57px;height:28px;background:#8c8a88;border-top-right-radius:9px;"></div><div class="t" style="left:578.60px;top:409.61px;font-size:17px;line-height:17px;color:#e0e0e0;letter-spacing:-1.526px;">AAC</div><div class="r" style="left:623px;top:403px;width:86px;height:28px;background:#8c8a88;border-top-right-radius:9px;"></div><div class="t" style="left:636.80px;top:409.61px;font-size:17px;line-height:17px;color:#e0e0e0;letter-spacing:0.086px;">Options</div><div class="r" style="left:417.4px;top:439.6px;width:10px;height:10px;border-radius:50%;background:#ff0000;"></div><div class="r" style="left:447px;top:440px;width:9px;height:10px;background:#13304f;"></div><div class="r" style="left:397px;top:459.5px;width:249px;height:2px;background:#5f8db4;"></div><div class="r" style="left:655px;top:431px;width:1px;height:406px;background:#2c6896;"></div><div class="t" style="left:661.30px;top:449.77px;font-size:13.5px;line-height:13.5px;color:#eaf4ff;letter-spacing:0.071px;">Threshold</div><div class="t" style="left:398.50px;top:479.23px;font-size:14.5px;line-height:14.5px;color:#eaf4ff;letter-spacing:-0.075px;">Pattern</div><div class="t" style="left:465.70px;top:479.23px;font-size:14.5px;line-height:14.5px;color:#eaf4ff;letter-spacing:0.317px;">MainId</div><div class="t" style="left:531.40px;top:479.23px;font-size:14.5px;line-height:14.5px;color:#eaf4ff;letter-spacing:-0.147px;">SubId</div><div class="t" style="left:589.00px;top:479.23px;font-size:14.5px;line-height:14.5px;color:#eaf4ff;letter-spacing:0.199px;">Strength</div><div class="r" style="left:397px;top:495px;width:249px;height:2px;background:#5f8db4;"></div><div class="r" style="left:687.5px;top:481px;width:2.5px;height:118px;background:#e4e4e4;"></div><div class="r" style="left:682.0px;top:578.5px;width:13px;height:13px;border-radius:50%;background:radial-gradient(circle at 40% 30%, #e8e8e8 0%, #b0b0b0 45%, #6a6a6a 100%);"></div><div class="t" style="left:675.00px;top:608.57px;font-size:13.5px;line-height:13.5px;color:#eaf4ff;letter-spacing:-0.290px;">0.10</div><div class="r" style="left:780px;top:396px;width:1088px;height:20px;background:#0f2c4f;"></div><div class="t" style="left:1243.40px;top:398.23px;font-size:14.5px;line-height:14.5px;color:#eef4fa;letter-spacing:-0.162px;">Channel Impulse Response (CIR)</div><div class="r" style="left:790.0px;top:427.4px;width:13px;height:13px;border-radius:50%;background:#e6e6e6;"></div><div class="t" style="left:807.50px;top:428.54px;font-size:12px;line-height:12px;color:#eeeeee;letter-spacing:-0.769px;">Freeze</div><div class="r" style="left:861.5px;top:427.4px;width:13px;height:13px;border-radius:50%;background:#e6e6e6;"></div><div class="t" style="left:878.40px;top:428.54px;font-size:12px;line-height:12px;color:#eeeeee;letter-spacing:-0.089px;">Gradient</div><div class="t" style="left:795.60px;top:469.34px;font-size:12px;line-height:12px;color:#eeeeee;letter-spacing:-0.099px;">Smoothing Level</div><div class="r" style="left:796px;top:488px;width:1px;height:4px;background:#8a8a8a;"></div><div class="r" style="left:810px;top:488px;width:1px;height:4px;background:#8a8a8a;"></div><div class="r" style="left:823px;top:488px;width:1px;height:4px;background:#8a8a8a;"></div><div class="r" style="left:836px;top:488px;width:1px;height:4px;background:#8a8a8a;"></div><div class="r" style="left:849px;top:488px;width:1px;height:4px;background:#8a8a8a;"></div><div class="r" style="left:862px;top:488px;width:1px;height:4px;background:#8a8a8a;"></div><div class="r" style="left:875px;top:488px;width:1px;height:4px;background:#8a8a8a;"></div><div class="r" style="left:889px;top:488px;width:1px;height:4px;background:#8a8a8a;"></div><div class="r" style="left:902px;top:488px;width:1px;height:4px;background:#8a8a8a;"></div><div class="r" style="left:915px;top:488px;width:1px;height:4px;background:#8a8a8a;"></div><div class="r" style="left:928px;top:488px;width:1px;height:4px;background:#8a8a8a;"></div><div class="r" style="left:790px;top:497.6px;width:145px;height:2px;background:#e0e0e0;"></div><div class="r" style="left:843.2px;top:492.1px;width:13px;height:13px;border-radius:50%;background:radial-gradient(circle at 40% 30%, #e8e8e8 0%, #b0b0b0 45%, #6a6a6a 100%);"></div><div class="t" style="left:795.60px;top:523.54px;font-size:12px;line-height:12px;color:#eeeeee;letter-spacing:-0.282px;">Zoom X</div><div class="r" style="left:797px;top:547.5px;width:138px;height:2px;background:#e0e0e0;"></div><div class="r" style="left:790.5px;top:542.0px;width:13px;height:13px;border-radius:50%;background:radial-gradient(circle at 40% 30%, #e8e8e8 0%, #b0b0b0 45%, #6a6a6a 100%);"></div><div class="t" style="left:795.60px;top:573.54px;font-size:12px;line-height:12px;color:#eeeeee;letter-spacing:-0.239px;">Zoom Y</div><div class="r" style="left:797px;top:597.4px;width:138px;height:2px;background:#e0e0e0;"></div><div class="r" style="left:790.5px;top:591.9px;width:13px;height:13px;border-radius:50%;background:radial-gradient(circle at 40% 30%, #e8e8e8 0%, #b0b0b0 45%, #6a6a6a 100%);"></div><div class="t" style="left:795.60px;top:623.34px;font-size:12px;line-height:12px;color:#eeeeee;letter-spacing:-0.373px;">x-Axis</div><div class="r" style="left:801.2px;top:642.8px;width:11.5px;height:11.5px;border-radius:50%;background:#f0f0f0;"></div><div class="t" style="left:819.30px;top:642.64px;font-size:12px;line-height:12px;color:#eeeeee;letter-spacing:-0.482px;">Samples</div><div class="r" style="left:801.2px;top:662.8px;width:11.5px;height:11.5px;border-radius:50%;background:#202020;border:2.8px solid #f0f0f0;box-sizing:border-box;"></div><div class="t" style="left:819.30px;top:662.64px;font-size:12px;line-height:12px;color:#eeeeee;letter-spacing:-0.242px;">Distance</div><div class="r" style="left:801.2px;top:682.8px;width:11.5px;height:11.5px;border-radius:50%;background:#f0f0f0;"></div><div class="t" style="left:819.30px;top:682.64px;font-size:12px;line-height:12px;color:#eeeeee;letter-spacing:-0.340px;">Time</div><svg class="r" style="left:0;top:0" width="1868" height="837"><rect x="1167.3" y="438" width="89.2" height="347.3" fill="#404040"/><line x1="1059.5" y1="437.5" x2="1859.5" y2="437.5" stroke="#5e5e5e" stroke-width="1"/><line x1="1059.5" y1="506.5" x2="1859.5" y2="506.5" stroke="#5e5e5e" stroke-width="1"/><line x1="1059.5" y1="576.5" x2="1859.5" y2="576.5" stroke="#5e5e5e" stroke-width="1"/><line x1="1059.5" y1="646.5" x2="1859.5" y2="646.5" stroke="#5e5e5e" stroke-width="1"/><line x1="1059.5" y1="715.5" x2="1859.5" y2="715.5" stroke="#5e5e5e" stroke-width="1"/><line x1="1059.5" y1="785.5" x2="1859.5" y2="785.5" stroke="#787878" stroke-width="1"/><line x1="1096.5" y1="438" x2="1096.5" y2="785.5" stroke="#5e5e5e" stroke-width="1"/><line x1="1149.5" y1="438" x2="1149.5" y2="785.5" stroke="#5e5e5e" stroke-width="1"/><line x1="1203.5" y1="438" x2="1203.5" y2="785.5" stroke="#5e5e5e" stroke-width="1"/><line x1="1256.5" y1="438" x2="1256.5" y2="785.5" stroke="#5e5e5e" stroke-width="1"/><line x1="1310.5" y1="438" x2="1310.5" y2="785.5" stroke="#5e5e5e" stroke-width="1"/><line x1="1363.5" y1="438" x2="1363.5" y2="785.5" stroke="#5e5e5e" stroke-width="1"/><line x1="1417.5" y1="438" x2="1417.5" y2="785.5" stroke="#5e5e5e" stroke-width="1"/><line x1="1470.5" y1="438" x2="1470.5" y2="785.5" stroke="#5e5e5e" stroke-width="1"/><line x1="1524.5" y1="438" x2="1524.5" y2="785.5" stroke="#5e5e5e" stroke-width="1"/><line x1="1577.5" y1="438" x2="1577.5" y2="785.5" stroke="#5e5e5e" stroke-width="1"/><line x1="1631.5" y1="438" x2="1631.5" y2="785.5" stroke="#5e5e5e" stroke-width="1"/><line x1="1684.5" y1="438" x2="1684.5" y2="785.5" stroke="#5e5e5e" stroke-width="1"/><line x1="1738.5" y1="438" x2="1738.5" y2="785.5" stroke="#5e5e5e" stroke-width="1"/><line x1="1791.5" y1="438" x2="1791.5" y2="785.5" stroke="#5e5e5e" stroke-width="1"/><line x1="1845.5" y1="438" x2="1845.5" y2="785.5" stroke="#5e5e5e" stroke-width="1"/><line x1="1859.5" y1="437.5" x2="1859.5" y2="785.5" stroke="#8a8a8a" stroke-width="1"/><line x1="1059.5" y1="437.5" x2="1059.5" y2="448" stroke="#8a8a8a" stroke-width="1"/><line x1="1059.5" y1="448" x2="1059.5" y2="785.5" stroke="#b4404e" stroke-width="1"/><line x1="1256.5" y1="438" x2="1256.5" y2="785.5" stroke="#b8b888" stroke-width="1"/><polyline points="1059.5,652.9 1060.3,659.5 1061.1,655.6 1061.9,647.9 1062.7,649.1 1063.5,655.2 1064.3,654.8 1065.1,662.6 1065.9,683.7 1066.7,683.6 1067.5,643.0 1068.3,640.5 1069.1,657.1 1069.9,673.1 1070.7,666.9 1071.5,655.9 1072.3,676.7 1073.1,666.1 1073.9,653.6 1074.7,657.7 1075.5,661.2 1076.3,663.6 1077.1,658.8 1077.9,684.7 1078.7,694.7 1079.5,678.9 1080.3,667.0 1081.1,670.1 1081.9,666.2 1082.7,674.0 1083.5,671.9 1084.3,647.2 1085.1,634.9 1085.9,638.5 1086.7,656.6 1087.5,668.0 1088.3,667.4 1089.1,657.3 1089.9,648.9 1090.7,654.4 1091.5,668.2 1092.3,663.2 1093.1,662.9 1093.9,666.7 1094.7,671.0 1095.5,671.4 1096.3,664.7 1097.1,661.9 1097.9,659.6 1098.7,658.3 1099.5,649.1 1100.3,653.9 1101.1,664.5 1101.9,652.1 1102.7,649.9 1103.5,648.3 1104.3,657.0 1105.1,660.8 1105.9,659.9 1106.7,662.4 1107.5,670.0 1108.3,671.2 1109.1,654.0 1109.9,668.1 1110.7,664.2 1111.5,652.2 1112.3,649.4 1113.1,646.2 1113.9,640.4 1114.7,636.0 1115.5,632.8 1116.3,623.2 1117.1,643.8 1117.9,646.2 1118.7,648.7 1119.5,650.7 1120.3,643.2 1121.1,640.1 1121.9,657.9 1122.7,662.3 1123.5,651.7 1124.3,645.0 1125.1,636.8 1125.9,644.1 1126.7,656.9 1127.5,663.8 1128.3,661.9 1129.1,665.1 1129.9,669.1 1130.7,658.7 1131.5,654.6 1132.3,655.3 1133.1,650.4 1133.9,635.3 1134.7,636.9 1135.5,643.9 1136.3,660.2 1137.1,668.7 1137.9,664.2 1138.7,660.3 1139.5,663.6 1140.3,660.9 1141.1,653.5 1141.9,660.6 1142.7,672.9 1143.5,672.9 1144.3,669.6 1145.1,664.7 1145.9,667.4 1146.7,656.5 1147.5,644.6 1148.3,648.3 1149.1,657.1 1149.9,656.1 1150.7,648.7 1151.5,642.8 1152.3,642.1 1153.1,653.9 1153.9,660.8 1154.7,647.1 1155.5,650.6 1156.3,654.7 1157.1,659.2 1157.9,667.1 1158.7,661.0 1159.5,650.1 1160.3,645.4 1161.1,664.0 1161.9,690.0 1162.7,677.0 1163.5,662.2 1164.3,652.4 1165.1,645.0 1165.9,628.9 1166.7,627.0 1167.5,627.9 1168.3,637.0 1169.1,652.8 1169.9,645.7 1170.7,650.3 1171.5,663.2 1172.3,662.8 1173.1,666.7 1173.9,674.9 1174.7,674.8 1175.5,672.7 1176.3,669.7 1177.1,669.9 1177.9,668.9 1178.7,679.4 1179.5,673.3 1180.3,672.9 1181.1,659.9 1181.9,645.4 1182.7,642.6 1183.5,640.0 1184.3,631.1 1185.1,624.6 1185.9,638.5 1186.7,640.1 1187.5,655.3 1188.3,655.1 1189.1,652.8 1189.9,659.7 1190.7,656.1 1191.5,658.3 1192.3,672.8 1193.1,671.4 1193.9,674.6 1194.7,680.9 1195.5,668.7 1196.3,658.9 1197.1,646.6 1197.9,651.2 1198.7,643.4 1199.5,649.5 1200.3,641.0 1201.1,647.2 1201.9,651.4 1202.7,648.4 1203.5,645.0 1204.3,640.3 1205.1,644.0 1205.9,666.2 1206.7,686.8 1207.5,696.2 1208.3,677.8 1209.1,662.1 1209.9,662.3 1210.7,667.0 1211.5,672.0 1212.3,673.9 1213.1,669.1 1213.9,668.3 1214.7,677.5 1215.5,669.2 1216.3,676.1 1217.1,671.7 1217.9,670.0 1218.7,669.8 1219.5,673.6 1220.3,671.6 1221.1,663.3 1221.9,654.0 1222.7,632.5 1223.5,646.3 1224.3,657.2 1225.1,660.8 1225.9,671.4 1226.7,680.4 1227.5,666.2 1228.3,661.6 1229.1,671.2 1229.9,666.6 1230.7,666.7 1231.5,655.9 1232.3,646.3 1233.1,643.8 1233.9,649.2 1234.7,658.2 1235.5,657.0 1236.3,666.3 1237.1,667.2 1237.9,669.3 1238.7,683.0 1239.5,690.9 1240.3,683.2 1241.1,689.7 1241.9,688.7 1242.7,677.4 1243.5,657.8 1244.3,662.0 1245.1,672.0 1245.9,649.6 1246.7,632.5 1247.5,640.1 1248.3,660.8 1249.1,661.5 1249.9,655.0 1250.7,653.9 1251.5,665.0 1252.3,673.2 1253.1,661.4 1253.9,659.7 1254.7,665.7 1255.5,646.3 1256.3,611.3 1257.1,569.9 1257.9,547.1 1258.7,567.3 1259.5,594.3 1260.3,613.7 1261.1,624.1 1261.9,611.0 1262.7,599.1 1263.5,600.4 1264.3,619.2 1265.1,624.3 1265.9,615.2 1266.7,617.4 1267.5,629.4 1268.3,637.9 1269.1,649.4 1269.9,649.9 1270.7,658.5 1271.5,658.6 1272.3,659.1 1273.1,668.5 1273.9,681.7 1274.7,674.7 1275.5,664.8 1276.3,667.2 1277.1,668.9 1277.9,660.1 1278.7,651.5 1279.5,650.7 1280.3,658.8 1281.1,655.8 1281.9,657.0 1282.7,663.9 1283.5,666.9 1284.3,659.8 1285.1,654.4 1285.9,639.0 1286.7,650.6 1287.5,658.8 1288.3,653.9 1289.1,643.7 1289.9,659.6 1290.7,664.9 1291.5,668.1 1292.3,665.8 1293.1,661.3 1293.9,660.2 1294.7,675.3 1295.5,667.2 1296.3,656.3 1297.1,668.9 1297.9,674.1 1298.7,682.2 1299.5,687.2 1300.3,662.2 1301.1,644.9 1301.9,657.7 1302.7,669.9 1303.5,660.3 1304.3,657.2 1305.1,653.6 1305.9,656.5 1306.7,663.8 1307.5,664.6 1308.3,668.0 1309.1,647.7 1309.9,640.9 1310.7,635.0 1311.5,638.0 1312.3,651.9 1313.1,660.0 1313.9,671.0 1314.7,677.6 1315.5,662.5 1316.3,655.7 1317.1,658.0 1317.9,647.7 1318.7,647.8 1319.5,653.6 1320.3,669.5 1321.1,675.4 1321.9,655.6 1322.7,647.2 1323.5,649.4 1324.3,649.7 1325.1,647.0 1325.9,646.5 1326.7,654.6 1327.5,661.5 1328.3,649.8 1329.1,658.0 1329.9,655.6 1330.7,652.6 1331.5,656.3 1332.3,666.6 1333.1,654.8 1333.9,655.4 1334.7,657.9 1335.5,661.1 1336.3,682.7 1337.1,694.4 1337.9,663.9 1338.7,641.8 1339.5,643.8 1340.3,658.3 1341.1,660.0 1341.9,661.5 1342.7,671.9 1343.5,664.0 1344.3,650.3 1345.1,637.2 1345.9,645.8 1346.7,643.0 1347.5,658.5 1348.3,667.5 1349.1,648.9 1349.9,659.0 1350.7,651.7 1351.5,645.6 1352.3,664.0 1353.1,669.6 1353.9,654.1 1354.7,657.9 1355.5,669.7 1356.3,668.9 1357.1,657.3 1357.9,646.5 1358.7,649.6 1359.5,641.8 1360.3,630.9 1361.1,629.2 1361.9,626.7 1362.7,626.0 1363.5,618.8 1364.3,580.5 1365.1,581.1 1365.9,618.5 1366.7,658.9 1367.5,679.0 1368.3,677.6 1369.1,671.4 1369.9,677.5 1370.7,677.3 1371.5,670.5 1372.3,661.2 1373.1,663.7 1373.9,658.6 1374.7,647.4 1375.5,650.7 1376.3,649.7 1377.1,655.2 1377.9,648.8 1378.7,648.0 1379.5,653.0 1380.3,663.3 1381.1,670.7 1381.9,668.1 1382.7,662.8 1383.5,649.8 1384.3,650.4 1385.1,660.4 1385.9,650.9 1386.7,648.5 1387.5,643.8 1388.3,650.6 1389.1,655.1 1389.9,641.3 1390.7,647.7 1391.5,669.8 1392.3,680.6 1393.1,676.5 1393.9,678.7 1394.7,673.7 1395.5,663.2 1396.3,660.3 1397.1,668.9 1397.9,660.1 1398.7,660.3 1399.5,675.5 1400.3,679.4 1401.1,657.2 1401.9,641.8 1402.7,627.2 1403.5,631.2 1404.3,638.6 1405.1,644.0 1405.9,663.8 1406.7,664.2 1407.5,658.8 1408.3,647.1 1409.1,663.1 1409.9,686.3 1410.7,668.2 1411.5,670.5 1412.3,666.3 1413.1,668.5 1413.9,661.9 1414.7,654.3 1415.5,656.6 1416.3,657.9 1417.1,643.2 1417.9,646.3 1418.7,651.5 1419.5,650.1 1420.3,649.6 1421.1,635.1 1421.9,639.8 1422.7,643.6 1423.5,649.8 1424.3,665.1 1425.1,670.2 1425.9,660.1 1426.7,650.6 1427.5,642.1 1428.3,649.7 1429.1,660.6 1429.9,651.8 1430.7,645.6 1431.5,646.0 1432.3,655.0 1433.1,661.7 1433.9,649.9 1434.7,654.1 1435.5,654.1 1436.3,661.0 1437.1,651.1 1437.9,651.3 1438.7,638.3 1439.5,630.8 1440.3,643.6 1441.1,667.6 1441.9,674.6 1442.7,670.2 1443.5,659.6 1444.3,660.7 1445.1,665.4 1445.9,665.8 1446.7,663.1 1447.5,657.4 1448.3,651.3 1449.1,660.4 1449.9,667.9 1450.7,682.0 1451.5,680.4 1452.3,673.5 1453.1,670.1 1453.9,656.0 1454.7,648.9 1455.5,659.2 1456.3,664.4 1457.1,663.4 1457.9,661.0 1458.7,664.1 1459.5,661.0 1460.3,661.3 1461.1,660.9 1461.9,658.3 1462.7,660.0 1463.5,652.6 1464.3,640.0 1465.1,644.9 1465.9,643.4 1466.7,648.4 1467.5,655.7 1468.3,659.6 1469.1,661.7 1469.9,658.8 1470.7,661.9 1471.5,658.3 1472.3,648.9 1473.1,652.7 1473.9,649.0 1474.7,650.4 1475.5,650.4 1476.3,656.4 1477.1,645.1 1477.9,627.6 1478.7,638.0 1479.5,648.3 1480.3,656.0 1481.1,660.1 1481.9,673.6 1482.7,671.3 1483.5,657.2 1484.3,654.1 1485.1,664.4 1485.9,668.4 1486.7,669.3 1487.5,670.1 1488.3,676.7 1489.1,675.9 1489.9,669.7 1490.7,678.9 1491.5,678.9 1492.3,676.9 1493.1,675.4 1493.9,665.1 1494.7,661.8 1495.5,658.9 1496.3,661.2 1497.1,655.8 1497.9,644.3 1498.7,645.0 1499.5,651.1 1500.3,648.1 1501.1,648.1 1501.9,645.8 1502.7,640.8 1503.5,652.1 1504.3,651.6 1505.1,652.1 1505.9,661.9 1506.7,669.1 1507.5,661.3 1508.3,664.5 1509.1,671.8 1509.9,676.5 1510.7,681.8 1511.5,687.3 1512.3,685.3 1513.1,691.3 1513.9,681.7 1514.7,678.6 1515.5,660.7 1516.3,634.6 1517.1,612.2 1517.9,588.5 1518.7,586.6 1519.5,621.3 1520.3,653.2 1521.1,660.0 1521.9,648.0 1522.7,649.0 1523.5,656.6 1524.3,665.3 1525.1,659.9 1525.9,665.4 1526.7,661.3 1527.5,663.0 1528.3,656.1 1529.1,673.6 1529.9,665.5 1530.7,671.7 1531.5,691.2 1532.3,679.2 1533.1,656.9 1533.9,656.5 1534.7,672.3 1535.5,668.7 1536.3,668.1 1537.1,666.1 1537.9,654.4 1538.7,637.1 1539.5,646.1 1540.3,655.4 1541.1,654.7 1541.9,645.4 1542.7,644.7 1543.5,648.8 1544.3,639.0 1545.1,650.1 1545.9,648.1 1546.7,635.5 1547.5,628.2 1548.3,639.3 1549.1,636.1 1549.9,627.7 1550.7,630.4 1551.5,632.3 1552.3,639.6 1553.1,651.2 1553.9,654.4 1554.7,656.7 1555.5,661.0 1556.3,661.7 1557.1,684.2 1557.9,677.7 1558.7,655.8 1559.5,658.5 1560.3,666.0 1561.1,657.7 1561.9,653.0 1562.7,660.8 1563.5,656.9 1564.3,660.1 1565.1,661.4 1565.9,656.8 1566.7,652.8 1567.5,666.1 1568.3,663.8 1569.1,659.2 1569.9,673.0 1570.7,674.3 1571.5,656.7 1572.3,652.7 1573.1,652.6 1573.9,653.2 1574.7,652.2 1575.5,638.5 1576.3,664.3 1577.1,678.8 1577.9,683.8 1578.7,669.3 1579.5,649.1 1580.3,649.9 1581.1,649.1 1581.9,641.8 1582.7,612.8 1583.5,607.5 1584.3,623.6 1585.1,637.4 1585.9,656.6 1586.7,658.3 1587.5,657.9 1588.3,656.4 1589.1,659.4 1589.9,670.6 1590.7,672.6 1591.5,657.9 1592.3,659.8 1593.1,662.4 1593.9,672.9 1594.7,686.3 1595.5,677.3 1596.3,660.2 1597.1,671.8 1597.9,680.6 1598.7,687.8 1599.5,682.5 1600.3,676.1 1601.1,670.8 1601.9,667.4 1602.7,668.2 1603.5,664.7 1604.3,656.2 1605.1,651.0 1605.9,647.3 1606.7,638.0 1607.5,647.9 1608.3,657.5 1609.1,661.1 1609.9,655.0 1610.7,667.4 1611.5,674.1 1612.3,663.8 1613.1,651.7 1613.9,653.5 1614.7,641.3 1615.5,649.0 1616.3,660.2 1617.1,646.1 1617.9,631.4 1618.7,648.2 1619.5,654.8 1620.3,640.1 1621.1,632.0 1621.9,640.6 1622.7,656.3 1623.5,659.4 1624.3,656.5 1625.1,647.4 1625.9,644.0 1626.7,656.6 1627.5,656.3 1628.3,662.6 1629.1,662.2 1629.9,669.2 1630.7,665.3 1631.5,654.7 1632.3,653.7 1633.1,644.6 1633.9,649.5 1634.7,650.3 1635.5,652.5 1636.3,654.6 1637.1,647.2 1637.9,629.4 1638.7,619.7 1639.5,644.4 1640.3,646.1 1641.1,649.3 1641.9,655.2 1642.7,652.7 1643.5,658.1 1644.3,652.0 1645.1,649.1 1645.9,667.6 1646.7,660.0 1647.5,658.9 1648.3,668.8 1649.1,663.8 1649.9,664.9 1650.7,668.0 1651.5,665.1 1652.3,676.3 1653.1,669.6 1653.9,673.0 1654.7,678.7 1655.5,672.7 1656.3,666.9 1657.1,663.6 1657.9,675.6 1658.7,671.3 1659.5,662.3 1660.3,652.0 1661.1,661.9 1661.9,660.3 1662.7,672.9 1663.5,665.8 1664.3,662.9 1665.1,663.0 1665.9,673.8 1666.7,685.0 1667.5,675.2 1668.3,652.3 1669.1,656.8 1669.9,665.7 1670.7,660.7 1671.5,670.1 1672.3,675.5 1673.1,670.9 1673.9,648.5 1674.7,643.2 1675.5,662.6 1676.3,659.3 1677.1,647.8 1677.9,651.9 1678.7,683.5 1679.5,679.4 1680.3,679.4 1681.1,694.0 1681.9,686.4 1682.7,680.1 1683.5,677.0 1684.3,679.6 1685.1,673.5 1685.9,671.4 1686.7,661.8 1687.5,661.3 1688.3,669.1 1689.1,670.7 1689.9,650.6 1690.7,648.9 1691.5,658.8 1692.3,672.2 1693.1,667.4 1693.9,650.5 1694.7,655.9 1695.5,669.1 1696.3,665.4 1697.1,661.2 1697.9,662.5 1698.7,658.5 1699.5,639.6 1700.3,639.3 1701.1,654.1 1701.9,670.8 1702.7,671.8 1703.5,667.9 1704.3,667.1 1705.1,672.8 1705.9,666.2 1706.7,670.2 1707.5,682.7 1708.3,694.1 1709.1,684.3 1709.9,676.3 1710.7,663.5 1711.5,653.1 1712.3,649.0 1713.1,663.6 1713.9,668.5 1714.7,647.3 1715.5,652.8 1716.3,659.6 1717.1,660.8 1717.9,661.7 1718.7,647.9 1719.5,641.5 1720.3,635.4 1721.1,639.5 1721.9,644.7 1722.7,649.0 1723.5,661.8 1724.3,665.0 1725.1,662.0 1725.9,662.5 1726.7,651.5 1727.5,641.5 1728.3,631.7 1729.1,637.8 1729.9,649.0 1730.7,634.4 1731.5,627.9 1732.3,649.9 1733.1,650.1 1733.9,646.5 1734.7,655.8 1735.5,655.3 1736.3,656.5 1737.1,666.5 1737.9,661.6 1738.7,665.8 1739.5,680.2 1740.3,675.0 1741.1,668.3 1741.9,674.4 1742.7,670.8 1743.5,666.7 1744.3,665.6 1745.1,655.2 1745.9,655.8 1746.7,659.7 1747.5,645.5 1748.3,635.2 1749.1,638.0 1749.9,648.0 1750.7,642.0 1751.5,636.0 1752.3,641.3 1753.1,637.2 1753.9,637.7 1754.7,646.4 1755.5,646.4 1756.3,647.4 1757.1,641.3 1757.9,648.4 1758.7,654.2 1759.5,651.5 1760.3,649.4 1761.1,647.1 1761.9,653.1 1762.7,669.4 1763.5,671.4 1764.3,664.6 1765.1,663.5 1765.9,658.6 1766.7,640.4 1767.5,645.4 1768.3,652.9 1769.1,644.1 1769.9,638.0 1770.7,652.3 1771.5,671.4 1772.3,665.4 1773.1,655.2 1773.9,646.8 1774.7,659.0 1775.5,640.1 1776.3,634.6 1777.1,628.5 1777.9,631.0 1778.7,626.4 1779.5,620.7 1780.3,626.9 1781.1,630.2 1781.9,644.4 1782.7,656.3 1783.5,661.3 1784.3,664.5 1785.1,658.2 1785.9,651.7 1786.7,669.8 1787.5,676.2 1788.3,658.5 1789.1,641.3 1789.9,642.0 1790.7,644.1 1791.5,652.7 1792.3,670.7 1793.1,681.3 1793.9,699.4 1794.7,688.8 1795.5,680.3 1796.3,697.1 1797.1,705.8 1797.9,696.3 1798.7,677.7 1799.5,659.6 1800.3,646.1 1801.1,657.4 1801.9,683.9 1802.7,687.1 1803.5,661.4 1804.3,651.7 1805.1,668.4 1805.9,668.6 1806.7,665.2 1807.5,662.0 1808.3,659.0 1809.1,649.1 1809.9,641.3 1810.7,641.3 1811.5,631.1 1812.3,625.7 1813.1,648.2 1813.9,655.1 1814.7,641.4 1815.5,633.3 1816.3,643.0 1817.1,644.4 1817.9,648.3 1818.7,643.0 1819.5,644.6 1820.3,635.4 1821.1,631.9 1821.9,629.3 1822.7,623.0 1823.5,629.3 1824.3,641.7 1825.1,643.3 1825.9,654.0 1826.7,634.7 1827.5,620.5 1828.3,637.3 1829.1,649.7 1829.9,656.2 1830.7,659.1 1831.5,667.4 1832.3,665.5 1833.1,668.9 1833.9,667.3 1834.7,659.0 1835.5,659.4 1836.3,660.2 1837.1,638.3 1837.9,650.5 1838.7,666.3 1839.5,654.3 1840.3,656.8 1841.1,658.8 1841.9,661.8 1842.7,683.2 1843.5,699.4 1844.3,680.8 1845.1,666.2 1845.9,663.2 1846.7,675.5 1847.5,677.4 1848.3,675.7 1849.1,681.3 1849.9,680.8 1850.7,677.2 1851.5,675.4 1852.3,661.8 1853.1,670.7 1853.9,669.3 1854.7,668.0 1855.5,664.4 1856.3,648.8 1857.1,635.7 1857.9,631.1 1858.7,639.7" fill="none" stroke="#d8d8d8" stroke-width="0.95"/><circle cx="1256.8" cy="554.3" r="4" fill="#f0f000"/><circle cx="1364.4" cy="575.8" r="4" fill="#f01010"/></svg><div class="t" style="left:1029.13px;top:431.30px;font-size:13px;line-height:13px;color:#ececec;">0.0</div><div class="t" style="left:1017.57px;top:500.80px;font-size:13px;line-height:13px;color:#ececec;">-10.0</div><div class="t" style="left:1017.57px;top:570.30px;font-size:13px;line-height:13px;color:#ececec;">-20.0</div><div class="t" style="left:1017.57px;top:639.80px;font-size:13px;line-height:13px;color:#ececec;">-30.0</div><div class="t" style="left:1017.57px;top:709.30px;font-size:13px;line-height:13px;color:#ececec;">-40.0</div><div class="t" style="left:1017.57px;top:778.80px;font-size:13px;line-height:13px;color:#ececec;">-50.0</div><div class="t" style="left:1086.81px;top:792.30px;font-size:13px;line-height:13px;color:#ececec;">-60</div><div class="t" style="left:1140.30px;top:792.30px;font-size:13px;line-height:13px;color:#ececec;">-40</div><div class="t" style="left:1193.79px;top:792.30px;font-size:13px;line-height:13px;color:#ececec;">-20</div><div class="t" style="left:1253.07px;top:792.30px;font-size:13px;line-height:13px;color:#ececec;">0</div><div class="t" style="left:1302.94px;top:792.30px;font-size:13px;line-height:13px;color:#ececec;">20</div><div class="t" style="left:1356.44px;top:792.30px;font-size:13px;line-height:13px;color:#ececec;">40</div><div class="t" style="left:1409.93px;top:792.30px;font-size:13px;line-height:13px;color:#ececec;">60</div><div class="t" style="left:1463.42px;top:792.30px;font-size:13px;line-height:13px;color:#ececec;">80</div><div class="t" style="left:1513.30px;top:792.30px;font-size:13px;line-height:13px;color:#ececec;">100</div><div class="t" style="left:1566.79px;top:792.30px;font-size:13px;line-height:13px;color:#ececec;">120</div><div class="t" style="left:1620.29px;top:792.30px;font-size:13px;line-height:13px;color:#ececec;">140</div><div class="t" style="left:1673.78px;top:792.30px;font-size:13px;line-height:13px;color:#ececec;">160</div><div class="t" style="left:1727.27px;top:792.30px;font-size:13px;line-height:13px;color:#ececec;">180</div><div class="t" style="left:1780.77px;top:792.30px;font-size:13px;line-height:13px;color:#ececec;">200</div><div class="t" style="left:1834.26px;top:792.30px;font-size:13px;line-height:13px;color:#ececec;">220</div><div class="t" style="left:1385.10px;top:813.29px;font-size:13.6px;line-height:13.6px;color:#ececec;">Distance Difference (km)</div><div class="t" style="left:989.9px;top:609.5px;font-size:14px;line-height:14px;color:#ececec;transform:translate(-50%,-50%) rotate(-90deg);">Magnitude (dB)</div>
</body></html>
